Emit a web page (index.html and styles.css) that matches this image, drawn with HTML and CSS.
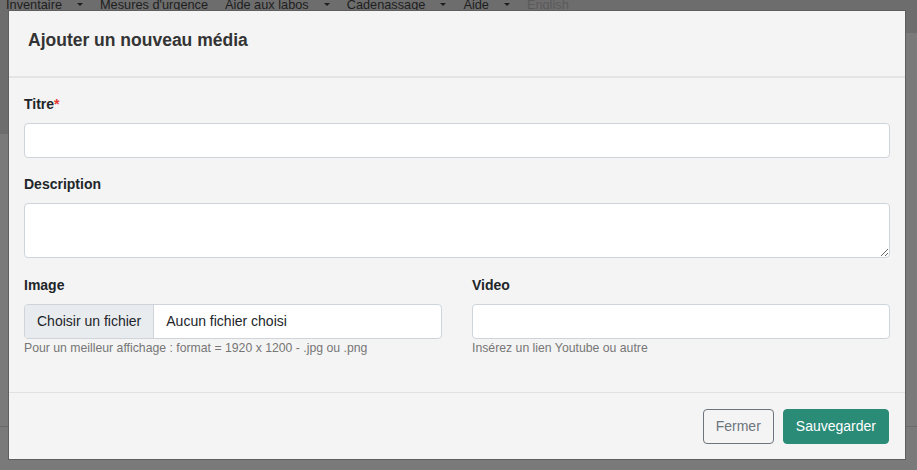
FILE: index.html
```html
<!DOCTYPE html>
<html lang="fr">
<head>
<meta charset="utf-8">
<title>Ajouter un nouveau média</title>
<link rel="stylesheet" href="styles.css">
</head>
<body>
<div class="page">
  <nav class="topnav">
    <ul class="nav-list">
      <li class="nav-item">Inventaire<span class="caret"></span></li>
      <li class="nav-item">Mesures d'urgence</li>
      <li class="nav-item">Aide aux labos<span class="caret"></span></li>
      <li class="nav-item">Cadenassage<span class="caret"></span></li>
      <li class="nav-item">Aide<span class="caret"></span></li>
      <li class="nav-item nav-muted">English</li>
    </ul>
  </nav>
  <div class="band band-side"></div>
  <div class="band band-main"></div>
  <div class="band band-rest"></div>
</div>

<div class="modal" role="dialog">
  <div class="modal-header">
    <h5 class="modal-title">Ajouter un nouveau média</h5>
  </div>
  <div class="modal-body">
    <div class="form-group">
      <label class="form-label">Titre<span class="req">*</span></label>
      <input class="form-control" type="text">
    </div>
    <div class="form-group">
      <label class="form-label">Description</label>
      <textarea class="form-control form-textarea"></textarea>
    </div>
    <div class="form-row">
      <div class="form-group">
        <label class="form-label">Image</label>
        <div class="file-input">
          <span class="file-btn">Choisir un fichier</span>
          <span class="file-name">Aucun fichier choisi</span>
        </div>
        <small class="help">Pour un meilleur affichage : format = 1920 x 1200 - .jpg ou .png</small>
      </div>
      <div class="form-group">
        <label class="form-label">Video</label>
        <input class="form-control" type="text">
        <small class="help">Insérez un lien Youtube ou autre</small>
      </div>
    </div>
  </div>
  <div class="modal-footer">
    <button class="btn btn-outline" type="button">Fermer</button>
    <button class="btn btn-primary" type="button">Sauvegarder</button>
  </div>
</div>
</body>
</html>
```
FILE: styles.css
```css
* { box-sizing: border-box; }

html, body {
  margin: 0;
  padding: 0;
}

body {
  background: #7a7a7a;
  font-family: "Liberation Sans", Arial, Helvetica, sans-serif;
  font-size: 14px;
  line-height: 1.5;
  color: #212529;
  overflow: hidden;
  height: 470px;
}

.page {
  width: 100%;
}

.topnav {
  height: 33px;
  background: #6d6d6d;
  overflow: hidden;
}

.nav-list {
  list-style: none;
  margin: -5px 0 0 0;
  padding: 0 0 0 6px;
  display: flex;
  align-items: baseline;
}

.nav-item {
  margin-right: 17px;
  color: #1e1e1e;
  white-space: nowrap;
  font-size: 12.75px;
  line-height: 20px;
}

.nav-muted {
  color: #5a5a5a;
}

.caret {
  display: inline-block;
  width: 0;
  height: 0;
  margin-left: 15px;
  vertical-align: 3px;
  border-top: 3px solid #1e1e1e;
  border-left: 3px solid transparent;
  border-right: 3px solid transparent;
}

.band-side {
  height: 101px;
  background: linear-gradient(to right, #6d6d6d 0, #6d6d6d 8px, #7a7a7a 8px);
}

.band-main {
  height: 293px;
  border-bottom: 1px solid #6a6a6a;
}

.band-rest {
  height: 43px;
  background: #7a7a7a;
}

/* modal overlay */
.modal {
  position: fixed;
  left: 8px;
  top: 10px;
  width: 898px;
  background: #f4f4f4;
  border: 1px solid #5e5e5e;
}

.modal-header {
  padding: 17px 19px 24px;
  border-bottom: 2px solid #e4e4e4;
}

.modal-title {
  margin: 0;
  font-size: 17.5px;
  line-height: 24px;
  font-weight: bold;
  color: #333333;
}

.modal-body {
  padding: 16px 15px 19px;
}

.form-group {
  margin-bottom: 16px;
}

.form-row {
  display: grid;
  grid-template-columns: 1fr 1fr;
  column-gap: 30px;
  padding-top: 1px;
}

.form-label {
  display: block;
  font-weight: bold;
  margin-bottom: 8px;
  line-height: 21px;
  color: #212529;
}

.req {
  color: #e3342f;
}

.form-control {
  display: block;
  width: 100%;
  height: 35px;
  padding: 6px 12px;
  font-family: inherit;
  font-size: 14px;
  line-height: 21px;
  color: #495057;
  background: #ffffff;
  border: 1px solid #ced4da;
  border-radius: 4px;
  margin: 0;
}

.form-textarea {
  height: 55px;
  resize: vertical;
}

.file-input {
  display: flex;
  height: 35px;
  background: #ffffff;
  border: 1px solid #ced4da;
  border-radius: 4px;
  overflow: hidden;
}

.file-btn {
  padding: 6px 12px;
  background: #e9ecef;
  border-right: 1px solid #ced4da;
  color: #212529;
  line-height: 21px;
  white-space: nowrap;
}

.file-name {
  padding: 6px 12px;
  color: #212529;
  line-height: 21px;
  white-space: nowrap;
}

.help {
  display: block;
  margin-top: 0;
  font-size: 12.25px;
  line-height: 18px;
  color: #767676;
}

.modal-footer {
  display: flex;
  justify-content: flex-end;
  gap: 9px;
  padding: 16px 16px 15px;
  border-top: 1px solid #e1e1e1;
}

.btn {
  font-family: inherit;
  font-size: 14px;
  line-height: 21px;
  padding: 6px 12px;
  border-radius: 4px;
  border: 1px solid transparent;
  margin: 0;
  cursor: pointer;
}

.btn-outline {
  background: transparent;
  color: #6c757d;
  border-color: #6c757d;
}

.btn-primary {
  background: #2a8b77;
  border-color: #2a8b77;
  color: #ffffff;
}
```
